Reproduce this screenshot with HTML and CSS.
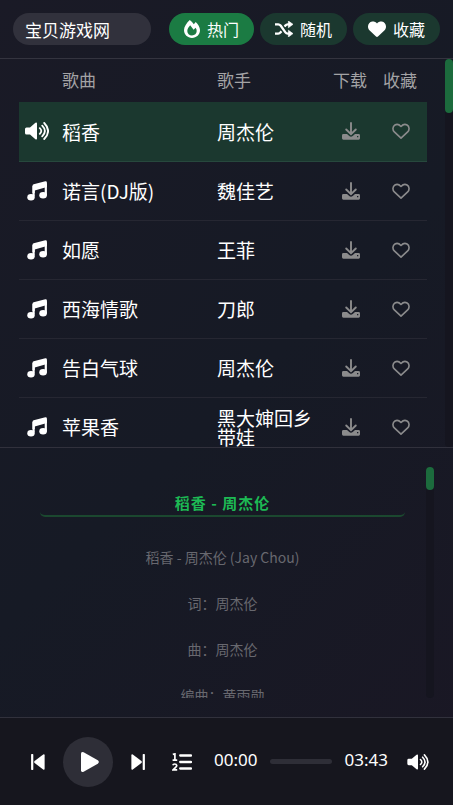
FILE: index.html
```html
<!DOCTYPE html>
<html lang="zh-CN">
<head>
<meta charset="utf-8">
<meta name="viewport" content="width=device-width, initial-scale=1">
<title>音乐播放器</title>
<link rel="stylesheet" href="styles.css">
</head>
<body>
<svg class="sprite" aria-hidden="true">
  <symbol id="music" viewBox="0 0 20 20">
    <path d="M6.6 5.1v10.3M18.8 2.4v11.5" fill="none" stroke="currentColor" stroke-width="2.2"/>
    <path d="M5.5 4.7Q5.6 3.6 6.7 3.2L18.3.2Q19.9 0 19.9 1.4V6L7.7 9.4V12H5.5Z"/>
    <ellipse cx="4" cy="16.2" rx="3.7" ry="3.2"/><ellipse cx="16.1" cy="14.3" rx="3.8" ry="3.2"/>
  </symbol>
  <symbol id="volume" viewBox="0 0 24 18">
    <path d="M1.5 5.4H5L10.4.8Q12 0 12 1.6V16.4Q12 18 10.4 17.2L5 12.6H1.5Q0 12.6 0 11V7Q0 5.4 1.5 5.4Z"/>
    <path d="M14.8 6.2Q17.8 9 14.8 11.8M17.2 3.6Q22.6 9 17.2 14.4M19.2 1Q27 9 19.2 17" fill="none" stroke="currentColor" stroke-width="1.8" stroke-linecap="round"/>
  </symbol>
  <symbol id="download" viewBox="0 0 18 18">
    <path d="M9 1v10M4.2 7.5 9 12.2l4.800-4.700" fill="none" stroke="currentColor" stroke-width="1.900" stroke-linecap="round"/>
    <path d="M1.400 12H5l2.300 2.100Q9 15.400 10.700 14.100L13 12h3.600Q18 12 18 13.400v2.900q0 1.400-1.400 1.400H1.400Q0 17.700 0 16.300v-2.900Q0 12 1.400 12ZM15 14v1.300h1.300V14Z" fill-rule="evenodd"/>
  </symbol>
  <symbol id="heart-line" viewBox="0 0 512 512">
    <path d="M256 459 66 282C10 228 14 125 84 84c57-34 118-17 172 43 54-60 115-77 172-43 70 41 74 144 18 198Z" fill="none" stroke="currentColor" stroke-width="46" stroke-linejoin="round"/>
  </symbol>
  <symbol id="heart" viewBox="0 0 512 512">
    <path d="M47.6 300.4L228.3 469.1c7.5 7 17.4 10.9 27.7 10.9s20.2-3.9 27.7-10.9L464.4 300.4c30.4-28.3 47.6-68 47.6-109.5v-5.8c0-69.9-50.5-129.5-119.4-141C347 36.5 300.6 51.4 268 84L256 96 244 84c-32.6-32.6-79-47.5-124.6-39.9C50.5 55.6 0 115.2 0 185.1v5.8c0 41.5 17.2 81.2 47.6 109.5z"/>
  </symbol>
</svg>
<div class="app">
  <header class="toolbar">
    <input class="search" type="text" value="宝贝游戏网" aria-label="搜索">
    <nav class="tabs">
      <button class="tab active" type="button"><svg class="flame" viewBox="0 0 16 18"><path d="M5.8 0C7.4 1.3 8.8 2.8 9.8 4.3L11.7 2C14 4.200 16 7.300 16 10.100 16 14.600 12.500 18 8 18S0 14.600 0 10.100C0 6.700 2.600 3 5.800 0ZM6.200 5.300C4.500 7.200 3.300 9 3.300 10.900c0 2.700 2 4.500 4.700 4.500s4.700-1.800 4.700-4.400c0-1.200-.4-2.300-1.100-3.300L9.600 9.800Z" fill-rule="evenodd"/></svg>热门</button>
      <button class="tab" type="button"><svg class="shuffle" viewBox="0 0 18 16"><path d="M0 3.300h3.200Q4.600 3.300 5.600 4.500L10.400 11.300Q11.300 12.600 12.700 12.600H15M0 12.600h3.200q1.400 0 2.400-1.300l.8-1.100M9.600 5.600l.8-1.100q.9-1.200 2.300-1.200H15" fill="none" stroke="currentColor" stroke-width="2.300"/><path d="M13.400 0 18 3.300l-4.600 3.500ZM13.400 9.200 18 12.600 13.400 16Z" stroke="currentColor" stroke-width=".6" stroke-linejoin="round"/></svg>随机</button>
      <button class="tab" type="button"><svg class="heart" viewBox="0 32 512 448"><use href="#heart" width="512" height="512"/></svg>收藏</button>
    </nav>
  </header>

  <main class="songs">
    <div class="songs-view">
      <table class="song-table">
        <colgroup><col class="col-icon"><col class="col-song"><col><col class="col-action"><col class="col-action"></colgroup>
        <thead><tr><th></th><th>歌曲</th><th>歌手</th><th class="action">下载</th><th class="action">收藏</th></tr></thead>
        <tbody>
          <tr class="playing"><td class="state"><svg class="volume"><use href="#volume"/></svg></td><td>稻香</td><td>周杰伦</td><td class="action"><button type="button" aria-label="下载"><svg><use href="#download"/></svg></button></td><td class="action"><button type="button" aria-label="收藏"><svg><use href="#heart-line"/></svg></button></td></tr>
          <tr><td class="state"><svg><use href="#music"/></svg></td><td>诺言(DJ版)</td><td>魏佳艺</td><td class="action"><button type="button" aria-label="下载"><svg><use href="#download"/></svg></button></td><td class="action"><button type="button" aria-label="收藏"><svg><use href="#heart-line"/></svg></button></td></tr>
          <tr><td class="state"><svg><use href="#music"/></svg></td><td>如愿</td><td>王菲</td><td class="action"><button type="button" aria-label="下载"><svg><use href="#download"/></svg></button></td><td class="action"><button type="button" aria-label="收藏"><svg><use href="#heart-line"/></svg></button></td></tr>
          <tr><td class="state"><svg><use href="#music"/></svg></td><td>西海情歌</td><td>刀郎</td><td class="action"><button type="button" aria-label="下载"><svg><use href="#download"/></svg></button></td><td class="action"><button type="button" aria-label="收藏"><svg><use href="#heart-line"/></svg></button></td></tr>
          <tr><td class="state"><svg><use href="#music"/></svg></td><td>告白气球</td><td>周杰伦</td><td class="action"><button type="button" aria-label="下载"><svg><use href="#download"/></svg></button></td><td class="action"><button type="button" aria-label="收藏"><svg><use href="#heart-line"/></svg></button></td></tr>
          <tr><td class="state"><svg><use href="#music"/></svg></td><td>苹果香</td><td>黑大婶回乡带娃</td><td class="action"><button type="button" aria-label="下载"><svg><use href="#download"/></svg></button></td><td class="action"><button type="button" aria-label="收藏"><svg><use href="#heart-line"/></svg></button></td></tr>
        </tbody>
      </table>
    </div>
    <div class="track"><div class="thumb songs-thumb"></div></div>
  </main>

  <section class="lyrics">
    <div class="lyrics-view">
      <h2>稻香 - 周杰伦</h2>
      <p>稻香 - 周杰伦 (Jay Chou)</p>
      <p>词：周杰伦</p>
      <p>曲：周杰伦</p>
      <p>编曲：黄雨勋</p>
    </div>
    <div class="track"><div class="thumb lyrics-thumb"></div></div>
  </section>

  <footer class="player">
    <button class="skip" type="button" aria-label="上一首"><svg viewBox="0 0 14 16"><path d="M1.200 1v14" stroke="currentColor" stroke-width="2.200" stroke-linecap="round"/><path d="M12.200.4Q13.600-.2 13.600 1.200V14.800Q13.600 16.200 12.200 15.600L3.600 9Q2.600 8 3.600 7Z"/></svg></button>
    <button class="play" type="button" aria-label="播放"><svg viewBox="0 0 18 20"><path d="M2.600.3 16.800 8.300Q18.900 10 16.800 11.700L2.600 19.700Q0 20.700 0 18.200V1.800Q0-.7 2.600.3Z"/></svg></button>
    <button class="skip" type="button" aria-label="下一首"><svg viewBox="0 0 14 16"><path d="M12.800 1v14" stroke="currentColor" stroke-width="2.200" stroke-linecap="round"/><path d="M1.800.4Q.4-.2.4 1.200V14.800Q.4 16.200 1.800 15.600L10.400 9Q11.400 8 10.400 7Z"/></svg></button>
    <button class="mode" type="button" aria-label="列表循环"><svg viewBox="0 0 20 18"><path d="M8.200 2.500H19M8.200 9H19M8.200 15.500H19" stroke="currentColor" stroke-width="2.300" stroke-linecap="round"/><path d="M.8 1.400 2.900.9V7M.6 7.100h4.600M.8 12.300Q1.200 11 2.700 11C5 11 5.200 13 3.800 14.200L1.200 16.800H5.200" fill="none" stroke="currentColor" stroke-width="1.700"/></svg></button>
    <span class="time">00:00</span>
    <div class="progress" role="progressbar" aria-label="播放进度" aria-valuenow="0"></div>
    <span class="time">03:43</span>
    <button class="sound" type="button" aria-label="音量"><svg><use href="#volume"/></svg></button>
  </footer>
</div>
</body>
</html>
```
FILE: styles.css
```css
* { box-sizing: border-box; }

html, body { height: 100%; }

body {
  margin: 0;
  background: linear-gradient(135deg, #1a1a26, #161a25 50%, #1a1724);
  color: #fff;
  font-family: "Noto Sans CJK SC", sans-serif;
}

button {
  margin: 0;
  padding: 0;
  border: 0;
  background: none;
  color: inherit;
  font: inherit;
  cursor: pointer;
}

svg { display: block; fill: currentColor; }

.sprite { position: absolute; width: 0; height: 0; }

.app {
  display: grid;
  grid-template-rows: auto minmax(0, 388fr) minmax(0, 270fr) auto;
  height: 100vh;
}

/* toolbar */
.toolbar {
  display: flex;
  justify-content: space-between;
  align-items: center;
  gap: 12px;
  padding: 13px;
  border-bottom: 1px solid #34343f;
}

.search {
  flex: 0 1 138px;
  min-width: 0;
  height: 32px;
  padding: 0 12px;
  border: 0;
  border-radius: 16px;
  background: #31313c;
  color: #fff;
  font: inherit;
  font-size: 17px;
}

.tabs { display: flex; gap: 6px; }

.tab {
  display: flex;
  align-items: center;
  gap: 7px;
  height: 32px;
  padding: 0 15px;
  border-radius: 16px;
  background: #1b382f;
  font-size: 16px;
  white-space: nowrap;
}

.tab.active { background: #1b7b43; }

.flame { width: 16px; height: 18px; }
.shuffle { width: 18px; height: 16px; }
.heart { width: 18px; height: 16px; }

/* song list */
.songs { display: flex; }

.songs-view { flex: 1; min-width: 0; overflow: hidden; padding: 0 18px 0 19px; }

.song-table {
  width: 100%;
  border-collapse: collapse;
  table-layout: fixed;
  font-size: 19px;
  line-height: 19px;
  text-align: left;
}

.col-icon { width: 43px; }
.col-song { width: 38%; }
.col-action { width: 50px; }

th {
  height: 43px;
  padding: 0 0 2px;
  color: #a3a3a5;
  font-size: 17px;
  font-weight: inherit;
}

td { height: 59px; padding: 0 8px 0 0; border-bottom: 1px solid #262732; }

.playing { background: #1b382f; }
.playing td { border-color: #27483d; }

.state svg { width: 20px; height: 20px; margin-left: 8px; }
.state .volume { width: 24px; height: 18px; margin-left: 6px; }

td.action { padding: 0 2px 0 0; color: #8b8b8c; }
th.action { padding-right: 4px; text-align: center; }
.action button { display: block; margin: 0 auto; }
.action svg { width: 18px; height: 18px; }

.track { width: 8px; border-radius: 4px; background: #15151f; }
.thumb { border-radius: 4px; background: #1c6b3d; }
.songs-thumb { height: 14%; }
.lyrics-thumb { height: 10%; }

/* lyrics */
.lyrics {
  display: flex;
  padding: 19px;
  border-top: 1px solid #31313c;
}

.lyrics-view {
  flex: 1;
  min-width: 0;
  overflow: hidden;
  padding: 24px 21px 0;
  text-align: center;
}

h2 {
  margin: 0 0 28px;
  border-bottom: 2px solid #1b482f;
  border-radius: 5px;
  color: #1db954;
  font-size: 15px;
  line-height: 24px;
  letter-spacing: 1px;
}

p { margin: 0 0 22px; color: #68686f; font-size: 14px; line-height: 24px; }

/* player */
.player {
  display: flex;
  align-items: center;
  height: 88px;
  padding: 0 24px 0 31px;
  border-top: 1px solid #31313c;
  background: #16161e;
}

.skip svg { width: 14px; height: 16px; }

.play {
  display: grid;
  place-items: center;
  width: 50px;
  height: 50px;
  margin: 0 18px;
  padding-left: 4px;
  border-radius: 50%;
  background: #2e2e37;
}
.play svg { width: 18px; height: 20px; }

.mode { margin: 0 22px 0 27px; }
.mode svg { width: 20px; height: 18px; }

.time { font-family: "Noto Sans", sans-serif; font-size: 17px; line-height: 24px; padding-bottom: 4px; }

.progress { flex: 1; height: 5px; margin: 0 13px; border-radius: 3px; background: #2e2e37; }

.sound { margin-left: 19px; }
.sound svg { width: 22px; height: 16px; }
```
